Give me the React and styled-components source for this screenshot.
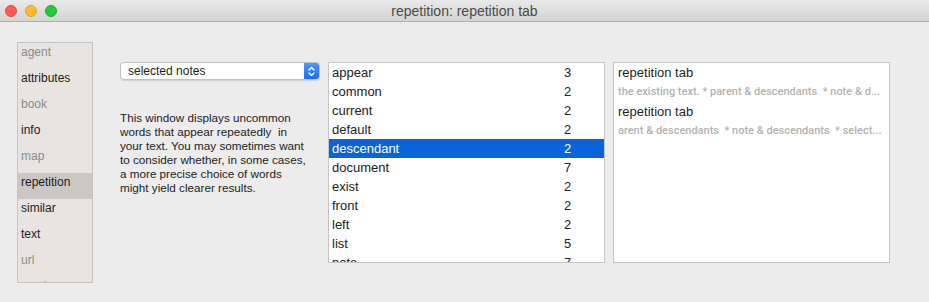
import React from 'react';
import styled, { createGlobalStyle } from 'styled-components';

const GlobalStyle = createGlobalStyle`
    html, body {
        margin: 0;
        padding: 0;
        background: #ececec;
    }
    body {
        font-family: "Liberation Sans", Arial, sans-serif;
        -webkit-font-smoothing: antialiased;
    }
`

const Window = styled.div`
    width: 929px;
    height: 302px;
    background: #ececec;
    display: flex;
    flex-direction: column;
    overflow: hidden;
`

const TitleBar = styled.div`
    height: 21px;
    flex: none;
    display: flex;
    align-items: center;
    position: relative;
    background: linear-gradient(#e9e9e9, #d3d3d3);
    border-bottom: 1px solid #b1b1b1;
`

const Lights = styled.div`
    display: flex;
    gap: 8px;
    padding-left: 5px;
`

const Light = styled.span`
    width: 12px;
    height: 12px;
    border-radius: 50%;
    box-sizing: border-box;
    background: ${props => props.color};
    border: 0.5px solid ${props => props.edge};
`

const Title = styled.div`
    position: absolute;
    left: 0;
    right: 0;
    text-align: center;
    font-size: 14px;
    color: #4a4a4a;
    pointer-events: none;
`

const Content = styled.div`
    display: flex;
    align-items: flex-start;
    padding: 20px 0 0 17px;
`

const Sidebar = styled.div`
    width: 74px;
    height: 239px;
    background: #e8e4e1;
    border: 1px solid #c4c4c4;
    overflow: hidden;
    flex: none;
`

const SideItem = styled.div`
    height: 26px;
    box-sizing: border-box;
    padding: 1px 0 0 3px;
    line-height: 16px;
    font-size: 12px;
    color: ${props => props.disabled ? '#8b8b8b' : '#1c1c1c'};
    background: ${props => props.selected ? '#cbc7c4' : 'transparent'};
`

const Middle = styled.div`
    width: 200px;
    margin-left: 27px;
    padding-top: 20px;
    flex: none;
`

const Popup = styled.div`
    height: 18px;
    box-sizing: border-box;
    display: flex;
    align-items: stretch;
    background: #fff;
    border: 1px solid #c2c2c2;
    border-radius: 4px;
    box-shadow: 0 0.5px 1px rgba(0,0,0,0.12);
    overflow: hidden;
`

const PopupLabel = styled.div`
    flex: 1;
    font-size: 12px;
    line-height: 16px;
    padding-left: 7px;
    color: #1e1e1e;
`

const Stepper = styled.div`
    width: 15px;
    background: linear-gradient(#4f97f9, #1a6ef0);
    display: flex;
    align-items: center;
    justify-content: center;
`

const Description = styled.p`
    margin: 31px 0 0 0;
    font-size: 11.7px;
    line-height: 14px;
    color: #222;
    white-space: pre;
`

const ListBox = styled.div`
    width: 275px;
    height: 199px;
    margin: 20px 0 0 ${props => props.gap}px;
    background: #fff;
    border: 1px solid #c5c5c5;
    overflow: hidden;
    flex: none;
`

const WordRow = styled.div`
    height: 19px;
    display: grid;
    grid-template-columns: 232px 1fr;
    padding-left: 3px;
    align-items: center;
    font-size: 13px;
    color: ${props => props.selected ? '#fff' : '#222'};
    background: ${props => props.selected ? '#0b64d7' : 'transparent'};
`

const Entry = styled.div`
    padding-left: 4px;
    white-space: nowrap;
`

const EntryTitle = styled.div`
    font-size: 13px;
    line-height: 19px;
    color: #1e1e1e;
`

const Snippet = styled.div`
    font-family: Roboto, "Liberation Sans", sans-serif;
    font-weight: 500;
    font-size: 11px;
    line-height: 20px;
    color: #b3b3b3;
    white-space: pre;
    overflow: hidden;
`

const sideItems = [
    { name: 'agent', disabled: true },
    { name: 'attributes' },
    { name: 'book', disabled: true },
    { name: 'info' },
    { name: 'map', disabled: true },
    { name: 'repetition', selected: true },
    { name: 'similar' },
    { name: 'text' },
    { name: 'url', disabled: true },
    { name: 'version', disabled: true },
];

const words = [
    ['appear', 3], ['common', 2], ['current', 2], ['default', 2], ['descendant', 2],
    ['document', 7], ['exist', 2], ['front', 2], ['left', 2], ['list', 5], ['note', 7],
];

const entries = [
    { title: 'repetition tab', snippet: 'the existing text. * parent & descendants  * note & d...' },
    { title: 'repetition tab', snippet: 'arent & descendants  * note & descendants  * select...' },
];

const App = () => {
    return (
        <Window>
            <GlobalStyle />
            <TitleBar>
                <Lights>
                    <Light color="#fd5b57" edge="#e2463f" />
                    <Light color="#febb2e" edge="#e0a028" />
                    <Light color="#27c63f" edge="#1ea932" />
                </Lights>
                <Title>repetition: repetition tab</Title>
            </TitleBar>
            <Content>
                <Sidebar>
                    {sideItems.map(item => (
                        <SideItem key={item.name} disabled={item.disabled} selected={item.selected}>
                            {item.name}
                        </SideItem>
                    ))}
                </Sidebar>
                <Middle>
                    <Popup>
                        <PopupLabel>selected notes</PopupLabel>
                        <Stepper>
                            <svg width="7" height="11" viewBox="0 0 7 11">
                                <path d="M1 4 L3.5 1.5 L6 4 M1 7 L3.5 9.5 L6 7" fill="none" stroke="#fff" strokeWidth="1.3" strokeLinecap="round" strokeLinejoin="round" />
                            </svg>
                        </Stepper>
                    </Popup>
                    <Description>{`This window displays uncommon
words that appear repeatedly  in
your text. You may sometimes want
to consider whether, in some cases,
a more precise choice of words
might yield clearer results.`}</Description>
                </Middle>
                <ListBox gap={8}>
                    {words.map(([word, count]) => (
                        <WordRow key={word} selected={word === 'descendant'}>
                            <span>{word}</span>
                            <span>{count}</span>
                        </WordRow>
                    ))}
                </ListBox>
                <ListBox gap={8}>
                    {entries.map((entry, index) => (
                        <Entry key={index}>
                            <EntryTitle>{entry.title}</EntryTitle>
                            <Snippet>{entry.snippet}</Snippet>
                        </Entry>
                    ))}
                </ListBox>
            </Content>
        </Window>
    )
}

export default App;
